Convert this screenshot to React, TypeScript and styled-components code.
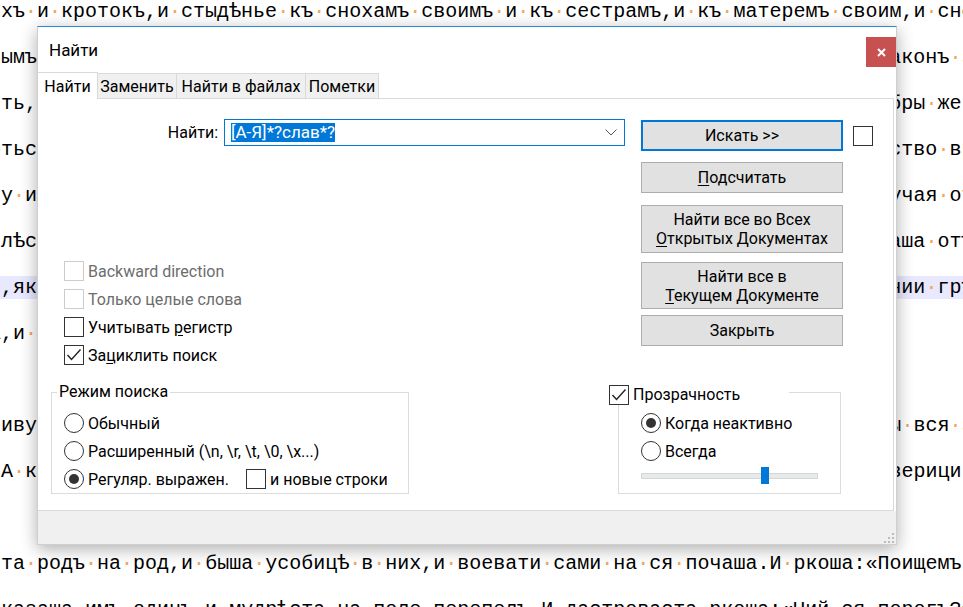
import React from 'react';
import styled, { createGlobalStyle } from 'styled-components';

const GlobalStyle = createGlobalStyle`
  html, body { margin: 0; padding: 0; background: #fff; }
  body { overflow: hidden; }
`;

const UI_FONT = `Roboto, 'Liberation Sans', 'DejaVu Sans', sans-serif`;

// --- editor behind the dialog -------------------------------------------

const FILLER =
   'по земли своей,и живяху кождо съ своимъ родомъ и на своихъ мѣстѣхъ,владѣюще кождо родомъ своимъ и отци';

// cols 0..3 are left of the dialog, cols 75..81 are right of it
const row = (left: string, right = '') => left + FILLER.slice(0, 75 - left.length) + right;

const LINES: { text: string; current?: boolean }[] = [
   { text: 'ихъ и кротокъ,и стыдѣнье къ снохамъ своимъ и къ сестрамъ,и къ матеремъ своим,и сно' },
   { text: row('нымъ', 'аконъ з') },
   { text: row('еть,', 'бры же ') },
   { text: row('отьс', 'ство вр') },
   { text: row('ку и', 'учая от') },
   { text: row('илѣс', 'аша отъ') },
   { text: row('и,як', 'нии грѣ'), current: true },
   { text: 'а,и ' + FILLER.slice(0, 36) },
   { text: '' },
   { text: row('риву', 'ы вся з') },
   { text: row(' А к', 'верици') },
   { text: '' },
   { text: 'ета родъ на род,и быша усобицѣ в них,и воевати сами на ся почаша.И ркоша:«Поищемъ' },
   { text: 'Сказаша имъ одинъ и мудрѣста на поле перепелъ.И дастроваста ркоша:«Чий ся порогъ?»' },
];

const Screen = styled.div`
   position: relative;
   width: 963px;
   height: 607px;
   overflow: hidden;
   background: #fff;
`;

const Editor = styled.div`
   margin-left: -11px;
   width: 990px;
   font-family: 'Liberation Mono', 'DejaVu Sans Mono', monospace;
   font-size: 20px;
   color: #000;
`;

const EditorRow = styled.div`
   height: 46px;
`;

const EditorText = styled.div<{ $current?: boolean }>`
   height: 23px;
   line-height: 23px;
   white-space: pre;
   background: ${(p) => (p.$current ? '#e8e8ff' : 'transparent')};
`;

const Ws = styled.span`
   color: #f4a55a;
`;

function EditorLine({ text, current }: { text: string; current?: boolean }) {
   const words = text.split(' ');
   return (
      <EditorRow>
         <EditorText $current={current}>
            {words.map((w, i) => (
               <React.Fragment key={i}>
                  {i > 0 && <Ws>·</Ws>}
                  {w}
               </React.Fragment>
            ))}
         </EditorText>
      </EditorRow>
   );
}

// --- dialog ---------------------------------------------------------------

const Dialog = styled.div`
   position: absolute;
   left: 37px;
   top: 26px;
   width: 860px;
   height: 519px;
   box-sizing: border-box;
   display: flex;
   flex-direction: column;
   background: #fff;
   border: 1px solid #cfcfcf;
   border-top-color: #2b88d8;
   box-shadow: 0 4px 16px rgba(0, 0, 0, 0.32);
   font-family: ${UI_FONT};
   font-size: 16px;
   color: #000;
`;

const TitleBar = styled.div`
   display: flex;
   height: 45px;
   padding-left: 11px;
   flex-shrink: 0;
`;

const Title = styled.div`
   align-self: center;
   font-size: 17px;
`;

const CloseButton = styled.div`
   margin-left: auto;
   margin-top: 10px;
   width: 30px;
   height: 30px;
   background: #c75050;
   display: flex;
   align-items: center;
   justify-content: center;
`;

const TabStrip = styled.div`
   display: flex;
   align-items: flex-end;
   height: 26px;
   flex-shrink: 0;
   position: relative;
   z-index: 1;
`;

const Tab = styled.div<{ $active?: boolean; $w: number }>`
   width: ${(p) => p.$w}px;
   height: ${(p) => (p.$active ? 27 : 25)}px;
   margin-bottom: ${(p) => (p.$active ? -1 : 0)}px;
   box-sizing: border-box;
   display: flex;
   align-items: center;
   justify-content: center;
   background: ${(p) => (p.$active ? '#fff' : '#f0f0f0')};
   border: 1px solid #d9d9d9;
   border-bottom: none;
   & + & {
      margin-left: -1px;
   }
   &:first-child {
      border-left: none;
   }
`;

const Panel = styled.div`
   flex: 1;
   margin-right: 2px;
   border-top: 1px solid #d9d9d9;
   border-right: 1px solid #d9d9d9;
   border-bottom: 1px solid #d9d9d9;
   padding-top: 20px;
   display: flex;
   flex-direction: column;
`;

const TopSection = styled.div`
   display: flex;
   align-items: flex-start;
`;

const LeftCol = styled.div`
   width: 603px;
`;

const FindRow = styled.div`
   display: grid;
   grid-template-columns: 180px 401px;
   column-gap: 6px;
   align-items: center;
`;

const FindLabel = styled.div`
   text-align: right;
`;

const Combo = styled.div`
   height: 27px;
   box-sizing: border-box;
   border: 1px solid #0078d7;
   display: flex;
   align-items: center;
   padding: 0 7px 0 6px;
   background: #fff;
   font-size: 17px;
`;

const Selection = styled.span`
   background: #0078d7;
   color: #fff;
   line-height: 19px;
`;

const Chevron = styled.svg`
   margin-left: auto;
`;

const Options = styled.div`
   margin-top: 111px;
   padding-left: 26px;
   display: flex;
   flex-direction: column;
`;

const OptionRow = styled.div<{ $disabled?: boolean }>`
   height: 28px;
   display: flex;
   align-items: center;
   gap: 4px;
   color: ${(p) => (p.$disabled ? '#6d6d6d' : '#000')};
   white-space: nowrap;
`;

const Box = styled.span<{ $disabled?: boolean }>`
   width: 20px;
   height: 20px;
   box-sizing: border-box;
   flex-shrink: 0;
   border: 1px solid ${(p) => (p.$disabled ? '#cccccc' : '#333')};
   background: #fff;
   display: flex;
   align-items: center;
   justify-content: center;
`;

const Key = styled.span`
   text-decoration: underline;
   text-underline-offset: 2px;
   text-decoration-thickness: 1px;
`;

const ButtonCol = styled.div`
   width: 202px;
   display: flex;
   flex-direction: column;
   padding-top: 1px;
`;

const ActionButton = styled.div<{ $h: number; $mt?: number; $default?: boolean }>`
   height: ${(p) => p.$h}px;
   margin-top: ${(p) => p.$mt ?? 0}px;
   box-sizing: border-box;
   border: ${(p) => (p.$default ? '2px solid #0078d7' : '1px solid #adadad')};
   background: #e1e1e1;
   display: flex;
   align-items: center;
   justify-content: center;
   text-align: center;
   line-height: 19px;
`;

const SideCheck = styled.div`
   margin: 7px 0 0 10px;
`;

const LowerSection = styled.div`
   display: flex;
   align-items: flex-start;
   margin-top: 13px;
`;

const GroupBox = styled.fieldset<{ $w: number; $ml: number; $pl: number; $pb: number }>`
   box-sizing: border-box;
   width: ${(p) => p.$w}px;
   min-width: 0;
   margin: 0 0 0 ${(p) => p.$ml}px;
   padding: 7px 0 ${(p) => p.$pb}px ${(p) => p.$pl}px;
   border: 1px solid #dcdcdc;
`;

const Legend = styled.legend<{ $ml: number; $w?: number; $drop?: number }>`
   margin-left: ${(p) => p.$ml}px;
   padding: 0 2px;
   line-height: 20px;
   height: 20px;
   ${(p) => (p.$w ? `width: ${p.$w}px; box-sizing: border-box; padding: 0;` : '')}
   display: flex;
   align-items: flex-start;
   gap: 4px;
   background: #fff;
   & > * {
      margin-top: ${(p) => p.$drop ?? 0}px;
   }
`;

const Radio = styled.span<{ $checked?: boolean }>`
   width: 20px;
   height: 20px;
   box-sizing: border-box;
   flex-shrink: 0;
   border: 1px solid #333;
   border-radius: 50%;
   background: #fff;
   display: flex;
   align-items: center;
   justify-content: center;
   &::after {
      content: '';
      width: 10px;
      height: 10px;
      border-radius: 50%;
      background: ${(p) => (p.$checked ? '#333' : 'transparent')};
   }
`;

const RegexText = styled.span`
   width: 154px;
`;

const Slider = styled.div`
   position: relative;
   width: 177px;
   height: 18px;
   box-sizing: border-box;
   padding-top: 6px;
   margin-top: 2px;
`;

const SliderTrack = styled.div`
   height: 6px;
   box-sizing: border-box;
   background: #e7eaea;
   border: 1px solid #d6d6d6;
`;

const SliderThumb = styled.div`
   position: absolute;
   top: 0;
   width: 8px;
   height: 17px;
   background: #0078d7;
`;

const Footer = styled.div`
   height: 33px;
   flex-shrink: 0;
   background: #f0f0f0;
   display: flex;
   justify-content: flex-end;
   align-items: flex-end;
   padding: 0 2px 1px 0;
   box-sizing: border-box;
`;

function Check({ checked, disabled }: { checked?: boolean; disabled?: boolean }) {
   return (
      <Box $disabled={disabled}>
         {checked && (
            <svg width="18" height="18" viewBox="0 0 18 18">
               <polyline points="2.5,9 6.5,13.5 15.5,3.5" fill="none" stroke="#222" strokeWidth="1.4" />
            </svg>
         )}
      </Box>
   );
}

function Grip() {
   const dots = [
      [8, 0],
      [4, 4],
      [8, 4],
      [0, 8],
      [4, 8],
      [8, 8],
   ];
   return (
      <svg width="10" height="10" viewBox="0 0 10 10">
         {dots.map(([x, y]) => (
            <rect key={`${x}-${y}`} x={x} y={y} width="2" height="2" fill="#bdbdbd" />
         ))}
      </svg>
   );
}

const SLIDER_VALUE = 0.714;

export default function App() {
   return (
      <Screen>
         <GlobalStyle />
         <Editor>
            {LINES.map((l, i) => (
               <EditorLine key={i} text={l.text} current={l.current} />
            ))}
         </Editor>

         <Dialog>
            <TitleBar>
               <Title>Найти</Title>
               <CloseButton>
                  <svg width="9" height="9" viewBox="0 0 9 9">
                     <path d="M1 1 L8 8 M8 1 L1 8" stroke="#fff" strokeWidth="2" />
                  </svg>
               </CloseButton>
            </TitleBar>

            <TabStrip>
               <Tab $active $w={60}>
                  Найти
               </Tab>
               <Tab $w={80}>Заменить</Tab>
               <Tab $w={130}>Найти в файлах</Tab>
               <Tab $w={74}>Пометки</Tab>
            </TabStrip>

            <Panel>
               <TopSection>
                  <LeftCol>
                     <FindRow>
                        <FindLabel>Найти:</FindLabel>
                        <Combo>
                           <Selection>[А-Я]*?слав*?</Selection>
                           <Chevron width="12" height="7" viewBox="0 0 12 7">
                              <polyline points="0.5,0.5 6,6 11.5,0.5" fill="none" stroke="#555" strokeWidth="1" />
                           </Chevron>
                        </Combo>
                     </FindRow>
                     <Options>
                        <OptionRow $disabled>
                           <Check disabled />
                           Backward direction
                        </OptionRow>
                        <OptionRow $disabled>
                           <Check disabled />
                           Только целые слова
                        </OptionRow>
                        <OptionRow>
                           <Check />
                           <span>
                              Учитывать <Key>р</Key>егистр
                           </span>
                        </OptionRow>
                        <OptionRow>
                           <Check checked />
                           <span>
                              За<Key>ц</Key>иклить поиск
                           </span>
                        </OptionRow>
                     </Options>
                  </LeftCol>

                  <ButtonCol>
                     <ActionButton $h={31} $default>
                        Искать &gt;&gt;
                     </ActionButton>
                     <ActionButton $h={31} $mt={11}>
                        <span>
                           <Key>П</Key>одсчитать
                        </span>
                     </ActionButton>
                     <ActionButton $h={48} $mt={12}>
                        <span>
                           Найти все во Всех
                           <br />
                           <Key>О</Key>ткрытых Документах
                        </span>
                     </ActionButton>
                     <ActionButton $h={47} $mt={9}>
                        <span>
                           Найти все в
                           <br />
                           <Key>Т</Key>екущем Документе
                        </span>
                     </ActionButton>
                     <ActionButton $h={31} $mt={6}>
                        Закрыть
                     </ActionButton>
                  </ButtonCol>

                  <SideCheck>
                     <Check />
                  </SideCheck>
               </TopSection>

               <LowerSection>
                  <GroupBox $w={358} $ml={13} $pl={12} $pb={0}>
                     <Legend $ml={-7}>
                        <span>Режим поиска</span>
                     </Legend>
                     <OptionRow>
                        <Radio />
                        Обычный
                     </OptionRow>
                     <OptionRow>
                        <Radio />
                        Расширенный (\n, \r, \t, \0, \x...)
                     </OptionRow>
                     <OptionRow>
                        <Radio $checked />
                        <RegexText>Регуляр. выражен.</RegexText>
                        <Check />
                        и новые строки
                     </OptionRow>
                  </GroupBox>

                  <GroupBox $w={223} $ml={209} $pl={22} $pb={8}>
                     <Legend $ml={-32} $w={180} $drop={3}>
                        <Check checked />
                        <span>Прозрачность</span>
                     </Legend>
                     <OptionRow>
                        <Radio $checked />
                        Когда неактивно
                     </OptionRow>
                     <OptionRow>
                        <Radio />
                        Всегда
                     </OptionRow>
                     <Slider>
                        <SliderTrack />
                        <SliderThumb style={{ left: `${Math.round(SLIDER_VALUE * 168)}px` }} />
                     </Slider>
                  </GroupBox>
               </LowerSection>
            </Panel>

            <Footer>
               <Grip />
            </Footer>
         </Dialog>
      </Screen>
   );
}
